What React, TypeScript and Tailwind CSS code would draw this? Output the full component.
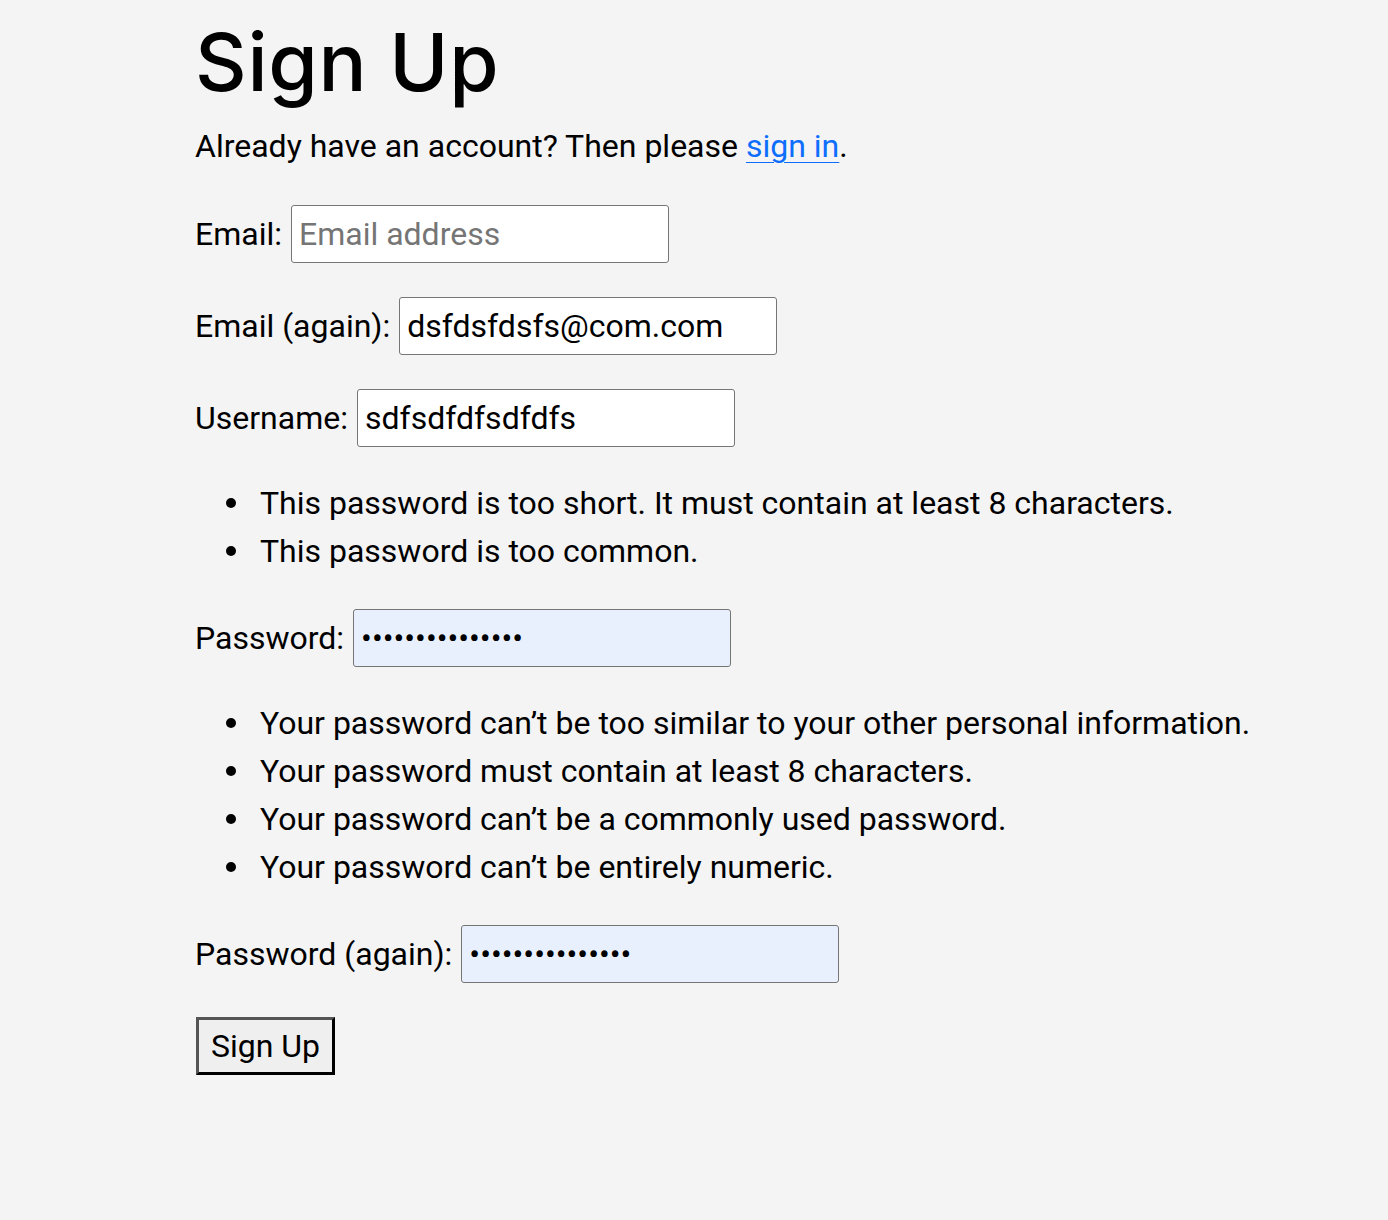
import React from "react";

const inputBase =
  "w-[378px] h-[58px] rounded-[3px] border border-[#767676] px-[7px] text-[32px] leading-normal text-black outline-none font-['Roboto',sans-serif] placeholder:text-[#757575]";

function Row({ label, children }: { label: string; children: React.ReactNode }) {
  return (
    <div className="flex items-baseline h-[58px]">
      <label className="mr-[9px] whitespace-nowrap">{label}</label>
      {children}
    </div>
  );
}

function Item({ children }: { children: React.ReactNode }) {
  return (
    <li className="flex items-center">
      <div className="w-[65px] shrink-0 pl-[31px]">
        <div className="size-[10px] rounded-full bg-black" />
      </div>
      <span>{children}</span>
    </li>
  );
}

export default function App() {
  return (
    <div className="min-h-[1220px] bg-[#f4f4f4] text-black font-['Roboto',sans-serif] text-[32px] leading-[48px]">
      <div className="pl-[195px] pt-[13px]">
        <h1 className="font-['Inter',sans-serif] font-medium text-[80px] leading-[97px] tracking-[0.7px]">
          Sign Up
        </h1>
        <p className="mt-[12px]">
          Already have an account? Then please{" "}
          <a href="#" className="text-[#0d6efd] underline decoration-1 underline-offset-[5px]">
            sign in
          </a>
          .
        </p>
        <form className="mt-[35px] flex flex-col" onSubmit={(e) => e.preventDefault()}>
          <Row label="Email:">
            <input type="email" placeholder="Email address" className={`${inputBase} bg-white`} />
          </Row>
          <div className="mt-[34px]">
            <Row label="Email (again):">
              <input type="email" defaultValue="dsfdsfdsfs@com.com" className={`${inputBase} bg-white`} />
            </Row>
          </div>
          <div className="mt-[34px]">
            <Row label="Username:">
              <input type="text" defaultValue="sdfsdfdfsdfdfs" className={`${inputBase} bg-white`} />
            </Row>
          </div>
          <ul className="mt-[32px]">
            <Item>This password is too short. It must contain at least 8 characters.</Item>
            <Item>This password is too common.</Item>
          </ul>
          <div className="mt-[34px]">
            <Row label="Password:">
              <input type="password" defaultValue="sdfsdfsdfsdfsdf" className={`${inputBase} bg-[#e8f0fe]`} />
            </Row>
          </div>
          <ul className="mt-[32px]">
            <Item>Your password can’t be too similar to your other personal information.</Item>
            <Item>Your password must contain at least 8 characters.</Item>
            <Item>Your password can’t be a commonly used password.</Item>
            <Item>Your password can’t be entirely numeric.</Item>
          </ul>
          <div className="mt-[34px]">
            <Row label="Password (again):">
              <input type="password" defaultValue="sdfsdfsdfsdfsdf" className={`${inputBase} bg-[#e8f0fe]`} />
            </Row>
          </div>
          <div className="mt-[34px] ml-[1px]">
            <button
              type="submit"
              className="h-[58px] px-[12px] bg-[#efefef] border-[3px] border-t-[#555555] border-l-[#555555] border-r-black border-b-black text-[32px] leading-normal font-['Roboto',sans-serif]"
            >
              Sign Up
            </button>
          </div>
        </form>
      </div>
    </div>
  );
}
